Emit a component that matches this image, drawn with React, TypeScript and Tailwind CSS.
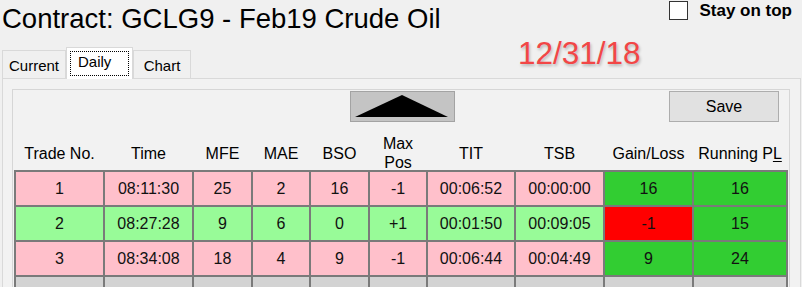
import React from 'react';

interface Trade {
  no: number;
  time: string;
  mfe: string;
  mae: string;
  bso: string;
  maxPos: string;
  tit: string;
  tsb: string;
  gain: string;
  running: string;
  win: boolean;
}

const trades: Trade[] = [
  { no: 1, time: '08:11:30', mfe: '25', mae: '2', bso: '16', maxPos: '-1', tit: '00:06:52', tsb: '00:00:00', gain: '16', running: '16', win: false },
  { no: 2, time: '08:27:28', mfe: '9', mae: '6', bso: '0', maxPos: '+1', tit: '00:01:50', tsb: '00:09:05', gain: '-1', running: '15', win: true },
  { no: 3, time: '08:34:08', mfe: '18', mae: '4', bso: '9', maxPos: '-1', tit: '00:06:44', tsb: '00:04:49', gain: '9', running: '24', win: false },
];

const cols = 'grid grid-cols-[87px_87px_57px_56px_57px_56px_86px_87px_87px_92px] gap-x-[2px] px-[2px]';

const Cell: React.FC<{ bg: string; children?: React.ReactNode }> = ({ bg, children }) => (
  <div className={`${bg} h-[33px] flex items-center justify-center text-[16px] text-[#111]`}>{children}</div>
);

const App: React.FC = () => {
  return (
    <div className="w-[802px] h-[287px] overflow-hidden bg-[#f0f0f0] font-['Liberation_Sans',Arial,sans-serif] text-black">
      {/* Title row */}
      <div className="h-[36px] flex justify-between">
        <div className="pl-[2px] pt-[3px] text-[27.5px] leading-[32px] whitespace-nowrap">
          Contract: GCLG9 - Feb19 Crude Oil
        </div>
        <label className="flex items-start gap-[11px] mr-[10px] mt-[1px]">
          <span className="w-[19px] h-[19px] border border-[#333] bg-white" />
          <span className="font-bold text-[17px] leading-[20px]">Stay on top</span>
        </label>
      </div>

      {/* Tabs + date */}
      <div className="h-[42px] flex items-end pl-[2px]">
        <div className="w-[64px] h-[28px] border border-b-0 border-[#d9d9d9] text-[15px] leading-[18px] text-center pt-[6px]">
          Current
        </div>
        <div className="relative z-10 -mb-px w-[67px] h-[32px] border border-b-0 border-[#d9d9d9] bg-white p-[3px]">
          <div className="h-[25px] border border-dotted border-black text-[15px] leading-[18px] pl-[7px] pt-[1px]">
            Daily
          </div>
        </div>
        <div className="w-[58px] h-[28px] border border-b-0 border-[#d9d9d9] text-[15px] leading-[18px] text-center pt-[6px]">
          Chart
        </div>
        <div className="self-start mt-[2px] ml-[327px] text-[31.5px] leading-none text-[#f24646] [text-shadow:1px_2px_3px_rgba(0,0,0,0.25)]">
          12/31/18
        </div>
      </div>

      {/* Tab page */}
      <div className="ml-[2px] w-[799px] h-[220px] border border-[#d9d9d9] bg-[#f2f2f2] pt-[10px] pl-[9px]">
        <div className="w-[778px] h-[220px] border border-[#d6d6d6]">
          {/* Buttons */}
          <div className="flex mt-[1px] h-[31px]">
            <button className="ml-[337px] w-[105px] h-[31px] bg-[#c4c4c4] border border-[#a3a3a3]">
              <svg width="103" height="29" viewBox="0 0 103 29" className="block">
                <polygon points="4,25 51,3 97,25" fill="#000" />
              </svg>
            </button>
            <button className="ml-auto mr-[10px] w-[110px] h-[31px] bg-[#e1e1e1] border border-[#adadad] text-[16px]">
              Save
            </button>
          </div>

          {/* Header */}
          <div className={`${cols} ml-[1px] h-[48px] pt-[12px] items-center text-[16px] leading-[19px] text-center`}>
            <div>Trade No.</div>
            <div>Time</div>
            <div>MFE</div>
            <div>MAE</div>
            <div>BSO</div>
            <div>Max<br />Pos</div>
            <div>TIT</div>
            <div>TSB</div>
            <div>Gain/Loss</div>
            <div className="whitespace-nowrap">Running P<span className="underline underline-offset-2">L</span></div>
          </div>

          {/* Grid */}
          <div className={`${cols} ml-[1px] w-[774px] bg-[#7a7a7a] py-[2px] gap-y-[2px]`}>
            {trades.map((t) => {
              const row = t.win ? 'bg-[#98fb98]' : 'bg-[#ffc0cb]';
              const gl = t.gain.startsWith('-') ? 'bg-[#ff0000]' : 'bg-[#32cd32]';
              return (
                <React.Fragment key={t.no}>
                  <Cell bg={row}>{t.no}</Cell>
                  <Cell bg={row}>{t.time}</Cell>
                  <Cell bg={row}>{t.mfe}</Cell>
                  <Cell bg={row}>{t.mae}</Cell>
                  <Cell bg={row}>{t.bso}</Cell>
                  <Cell bg={row}>{t.maxPos}</Cell>
                  <Cell bg={row}>{t.tit}</Cell>
                  <Cell bg={row}>{t.tsb}</Cell>
                  <Cell bg={gl}>{t.gain}</Cell>
                  <Cell bg="bg-[#32cd32]">{t.running}</Cell>
                </React.Fragment>
              );
            })}
            {Array.from({ length: 10 }).map((_, i) => (
              <Cell key={i} bg="bg-[#d3d3d3]" />
            ))}
          </div>
        </div>
      </div>
    </div>
  );
};

export default App;
